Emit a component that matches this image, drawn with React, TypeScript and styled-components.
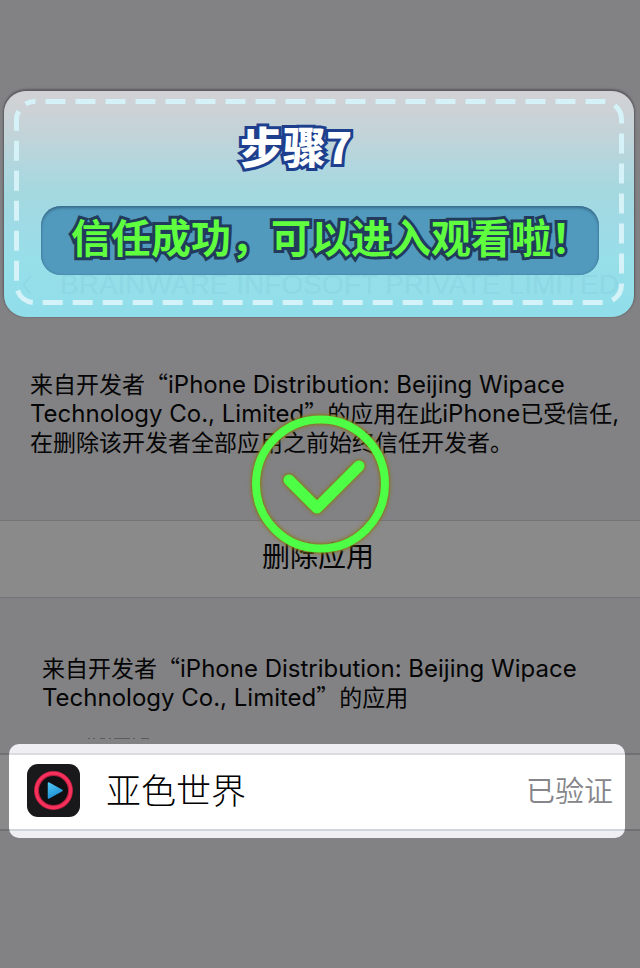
import React from "react";
import styled, { createGlobalStyle } from "styled-components";

const cjk = '"Noto Sans CJK SC", sans-serif';

const GlobalStyle = createGlobalStyle`
  * { box-sizing: border-box; }
  body {
    margin: 0;
    background: #828284;
    color: #050505;
    font-family: ${cjk};
  }
  h1, p { margin: 0; font-weight: 400; }
`;

const Page = styled.main`
  display: flex;
  flex-direction: column;
  min-height: 100vh;
  padding-top: 91px;
  overflow: hidden;
`;

const StepCard = styled.header`
  position: relative;
  display: flex;
  flex-direction: column;
  margin: 0 6px 0 4px;
  padding: 23px 35px 22px 37px;
  border-radius: 22px;
  background: linear-gradient(#d1d1d5 0%, #ccd2d6 9%, #bfd4d9 22%, #b0d7df 34%, #a4d8df 46%, #9fdae5 58%, #97dfe9 75%, #90deea 100%);
  box-shadow: 0 -1px 2px 1px #5d5a60;
`;

const Stitching = styled.svg`
  position: absolute;
  inset: 8px 10px 12px;
  width: calc(100% - 20px);
  height: calc(100% - 20px);
  overflow: visible;

  rect {
    width: calc(100% - 5px);
    height: calc(100% - 5px);
  }
`;

const StepTitle = styled.h1`
  padding-right: 48px;
  font: 900 43px/62px ${cjk};
  text-align: center;
  color: #fff;
  -webkit-text-stroke: 6px #1d3f8e;
  stroke-linejoin: round;
  paint-order: stroke fill;
`;

const Banner = styled.p`
  position: relative;
  margin-top: 30px;
  height: 69px;
  padding-left: 30px;
  border-radius: 20px;
  background: #519abd;
  box-shadow: inset 0 2px 3px #3a6b8b, inset 0 0 2px #3f7699;
  font: 700 40px/60px ${cjk};
  white-space: nowrap;
  color: #5fff40;
  -webkit-text-stroke: 6px #223b5c;
  stroke-linejoin: round;
  paint-order: stroke fill;
`;

const Ghost = styled.p`
  display: flex;
  align-items: center;
  gap: 27px;
  margin: 0 -21px 0 -20px;
  font: 400 28px/20px "Liberation Sans", sans-serif;
  white-space: nowrap;
  color: #8dd8e4;
`;

const Note = styled.p<{ $inset: number; $top: number }>`
  margin-top: ${(p) => p.$top}px;
  padding-left: ${(p) => p.$inset}px;
  font-family: ${cjk};
  font-size: 23px;
  line-height: 29px;
  white-space: nowrap;
`;

const Latin = styled.span`
  font-family: Inter, sans-serif;
  font-size: 24px;
  line-height: 1;
`;

const DeleteButton = styled.button`
  margin-top: 64px;
  height: 78px;
  padding: 0 4px 8px 0;
  border: solid #747478;
  border-width: 1px 0;
  background: #8a8a8a;
  color: #050505;
  font: 400 28px/40px ${cjk};
`;

const CutText = styled.svg`
  display: block;
  width: 64px;
  height: 2px;
  margin: 26px 0 5px 87px;
`;

const AppStrip = styled.section`
  display: flex;
  padding: 0 15px 0 9px;
  background: linear-gradient(transparent 9px, #707073 9px, #707073 11px, #8a8a8a 11px, #8a8a8a 85px, #707073 85px, #707073 87px, transparent 87px);
`;

const AppRow = styled.div`
  display: flex;
  flex: 1;
  align-items: center;
  height: 94px;
  padding: 0 12px 2px 18px;
  border-radius: 10px;
  background: linear-gradient(#efeef3 9px, #dddbe0 9px, #dddbe0 11px, #fff 11px, #fff 85px, #cfd5da 85px, #cfd5da 87px, #efeef3 87px);
`;

const AppName = styled.span`
  flex: 1;
  padding: 0 0 2px 26px;
  font: 300 35px/50px ${cjk};
  color: #000;
`;

const Status = styled.span`
  padding-bottom: 2px;
  font: 350 29px/42px ${cjk};
  color: #85858a;
`;

const SuccessMark = styled.svg`
  position: absolute;
  top: 408px;
  left: calc(50% - 76px);
  filter: drop-shadow(0 0 1px #8a7414) drop-shadow(0 0 2px #8a7414);
`;

export default function App() {
  return (
    <>
      <GlobalStyle />
      <Page>
        <StepCard>
          <Stitching aria-hidden="true">
            <rect x="2.5" y="2.5" rx="18" fill="none" stroke="#d4f2f7" strokeWidth="5" strokeDasharray="20 10" strokeDashoffset="-11" />
          </Stitching>
          <StepTitle>步骤7</StepTitle>
          <Banner>信任成功，可以进入观看啦！</Banner>
          <Ghost aria-hidden="true">
            <svg width="12" height="20" viewBox="0 0 12 22" fill="none" stroke="currentColor" strokeWidth="2">
              <path d="M10 1 2 11l8 10" />
            </svg>
            <span>BRAINWARE INFOSOFT PRIVATE LIMITED</span>
          </Ghost>
        </StepCard>

        <Note $inset={30} $top={52}>
          来自开发者“<Latin>iPhone Distribution: Beijing Wipace</Latin>
          <br />
          <Latin>Technology Co., Limited</Latin>”的应用在此<Latin>iPhone</Latin>已受信任<Latin>,</Latin>
          <br />
          在删除该开发者全部应用之前始终信任开发者。
        </Note>

        <DeleteButton type="button">删除应用</DeleteButton>

        <Note $inset={42} $top={55}>
          来自开发者“<Latin>iPhone Distribution: Beijing Wipace</Latin>
          <br />
          <Latin>Technology Co., Limited</Latin>”的应用
        </Note>
        <CutText viewBox="0 0 64 2" fill="none" stroke="#5c5c5f" aria-hidden="true">
          <path d="M1 1.5h2M6 1.5h2M13 1.5h5M22 1.5h2M27 1.5h16M46 1.5h2M54 1.5h8" />
        </CutText>

        <AppStrip>
          <AppRow>
            <svg width="53" height="53" viewBox="0 0 53 53" role="img" aria-label="亚色世界">
              <defs>
                <linearGradient id="play" x1="0" y1="0" x2="0.4" y2="1">
                  <stop offset="0" stopColor="#50c8f2" />
                  <stop offset="1" stopColor="#1e8fd6" />
                </linearGradient>
              </defs>
              <rect width="53" height="53" rx="11" fill="#19191b" />
              <circle cx="26.5" cy="26.5" r="17" fill="#101012" stroke="#b51f40" strokeWidth="5" />
              <circle cx="26.5" cy="26.5" r="17.2" fill="none" stroke="#f8315c" strokeWidth="3" />
              <path d="M21.5 19v15L35 26.5Z" fill="url(#play)" stroke="url(#play)" strokeWidth="1.5" strokeLinejoin="round" />
            </svg>
            <AppName>亚色世界</AppName>
            <Status>已验证</Status>
          </AppRow>
        </AppStrip>

        <SuccessMark width="152" height="152" viewBox="0 0 152 152" fill="none" stroke="#4dff45" role="img" aria-label="信任成功">
          <circle cx="76.5" cy="76" r="64.5" strokeWidth="8" />
          <path d="M45 72 73 100 115 58" strokeWidth="11" strokeLinecap="round" strokeLinejoin="round" />
        </SuccessMark>
      </Page>
    </>
  );
}
